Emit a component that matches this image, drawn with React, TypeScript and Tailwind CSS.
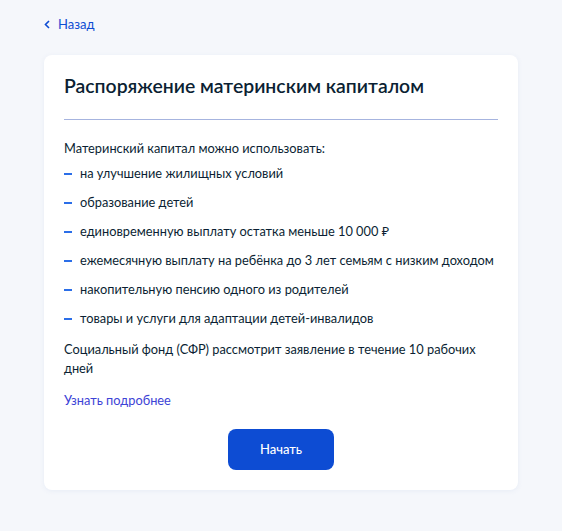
import React from 'react';

const items = [
  'на улучшение жилищных условий',
  'образование детей',
  'единовременную выплату остатка меньше 10 000 ₽',
  'ежемесячную выплату на ребёнка до 3 лет семьям с низким доходом',
  'накопительную пенсию одного из родителей',
  'товары и услуги для адаптации детей-инвалидов',
];

export default function App() {
  return (
    <div className="min-h-[531px] bg-[#f5f7fb] px-[44px] pt-[15px] pb-[40px] font-['Lato','Noto_Sans',sans-serif] text-[#0b1f33]">
      {/* Back link */}
      <a href="#" className="flex items-center gap-[8px] text-[13px] leading-[18px] text-[#0d4cd3]">
        <svg width="6" height="9" viewBox="0 0 6 9" fill="none" stroke="currentColor" strokeWidth="1.6">
          <path d="M5 1L1.5 4.5L5 8" />
        </svg>
        <span>Назад</span>
      </a>

      {/* Card */}
      <div className="mt-[22px] w-[474px] rounded-[8px] bg-white px-[20px] pt-[18px] pb-[20px] shadow-[0_1px_4px_rgba(230,235,245,0.9)]">
        <h1 className="text-[19.4px] font-semibold leading-[26px] text-[#0b1f33]">
          Распоряжение материнским капиталом
        </h1>
        <div className="mt-[20px] h-px bg-[#a6b4df]" />

        <p className="mt-[19px] text-[12.8px] leading-[18px]">Материнский капитал можно использовать:</p>
        <ul className="mt-[7px] flex flex-col gap-[11px]">
          {items.map((it) => (
            <li key={it} className="flex items-center text-[12.8px] leading-[18px]">
              <span className="mr-[8px] mt-[2px] h-[2px] w-[8px] shrink-0 bg-[#2b6ee8]" />
              {it}
            </li>
          ))}
        </ul>

        <p className="mt-[13px] text-[12.8px] leading-[19px]">
          Социальный фонд (СФР) рассмотрит заявление в течение 10 рабочих дней
        </p>
        <a href="#" className="mt-[13px] block text-[12.8px] leading-[18px] text-[#3d43d6]">
          Узнать подробнее
        </a>

        <div className="mt-[20px] flex justify-center">
          <button className="h-[41px] w-[106px] rounded-[8px] bg-[#0d4cd3] text-[13px] font-medium text-white">
            Начать
          </button>
        </div>
      </div>
    </div>
  );
}
